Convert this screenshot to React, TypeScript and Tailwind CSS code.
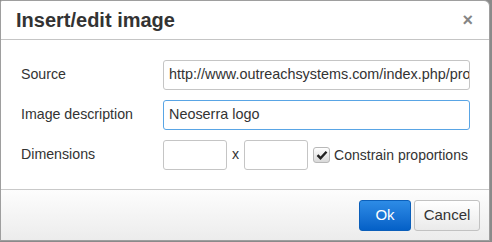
import { useState } from "react";

function Field({ value, focused, className = "" }: { value: string; focused?: boolean; className?: string }) {
  return (
    <div
      className={`flex h-[30px] shrink-0 items-center overflow-hidden whitespace-nowrap rounded-[3px] border bg-white pl-[5px] text-[14.4px] text-[#333] ${
        focused ? "border-[#59a5e5]" : "border-[#c5c5c5]"
      } ${className}`}
    >
      {value}
    </div>
  );
}

export default function App() {
  const [constrain, setConstrain] = useState(true);

  return (
    <div className="h-[242px] w-[492px] bg-[#8a8a8a] font-['Liberation_Sans',Arial,sans-serif]">
      <div className="flex h-[241px] w-[490px] flex-col overflow-hidden rounded-tl-[2px] rounded-tr-[6px] border border-[#9e9e9e] bg-white">
        <div className="flex h-[39px] shrink-0 items-center justify-between border-b border-[#c5c5c5] pl-[15px] pr-[16px]">
          <h1 className="text-[20px] font-bold text-[#333]">Insert/edit image</h1>
          <button className="text-[18px] font-bold leading-none text-[#858585]">×</button>
        </div>

        <div className="flex shrink-0 flex-col gap-[10px] whitespace-nowrap px-[20px] pb-[19px] pt-[20px] text-[14.2px] text-[#333]">
          <div className="flex h-[30px] items-center">
            <span className="w-[142px] shrink-0">Source</span>
            <Field className="w-[307px]" value="http://www.outreachsystems.com/index.php/pro" />
          </div>
          <div className="flex h-[30px] items-center">
            <span className="w-[142px] shrink-0">Image description</span>
            <Field className="w-[307px]" value="Neoserra logo" focused />
          </div>
          <div className="flex h-[30px] items-center">
            <span className="w-[142px] shrink-0">Dimensions</span>
            <Field className="w-[64px]" value="" />
            <span className="mx-[5px]">x</span>
            <Field className="w-[64px]" value="" />
            <button
              onClick={() => setConstrain(!constrain)}
              className="ml-[5px] flex h-[16px] w-[17px] shrink-0 items-center justify-center rounded-[3px] border border-[#b8b8b8] bg-gradient-to-b from-white to-[#d9d9d9]"
            >
              {constrain && (
                <svg width="12" height="10" viewBox="0 0 12 10">
                  <path d="M1.5 5.2 L4.5 8.2 L10.5 1.8" fill="none" stroke="#222" strokeWidth="2.4" />
                </svg>
              )}
            </button>
            <span className="ml-[4px] text-[14px]">Constrain proportions</span>
          </div>
        </div>

        <div className="flex flex-1 items-start justify-end gap-[3px] border-t border-[#c9c9c9] bg-gradient-to-b from-[#fdfdfd] to-[#ececec] pr-[9px] pt-[10px]">
          <button className="h-[31px] w-[52px] rounded-[3px] border border-[#0b5fba] bg-gradient-to-b from-[#2d8ce6] to-[#0460c7] text-[15px] text-white">
            Ok
          </button>
          <button className="h-[31px] w-[66px] rounded-[3px] border border-[#c2c2c2] bg-gradient-to-b from-white to-[#eaeaea] text-[15px] text-[#333]">
            Cancel
          </button>
        </div>
      </div>
    </div>
  );
}
